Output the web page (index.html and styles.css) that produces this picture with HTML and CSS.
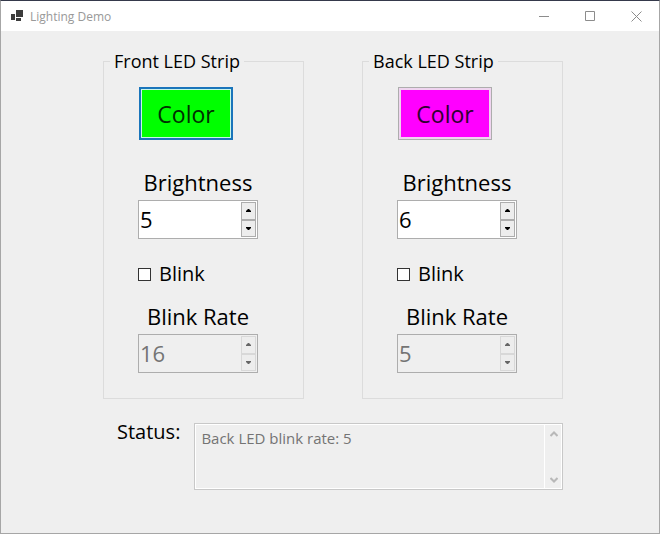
FILE: index.html
```
<!DOCTYPE html>
<html lang="en">
<head>
<meta charset="utf-8">
<title>Lighting Demo</title>
<link rel="stylesheet" href="styles.css">
</head>
<body>
<div class="window">
  <header class="titlebar">
    <svg class="app-icon" width="14" height="12" viewBox="0 0 14 12" aria-hidden="true"><path d="M5 0h7v7H5zM0 4h4v6H0zM5 8h5v3H5z"/></svg>
    <h1 class="title">Lighting Demo</h1>
    <button class="caption" type="button" aria-label="Minimize"><svg width="11" height="11" viewBox="0 0 11 11"><path d="M0 5.500h10"/></svg></button>
    <button class="caption" type="button" aria-label="Maximize"><svg width="11" height="11" viewBox="0 0 11 11"><path d="M.5.500h9v9h-9z"/></svg></button>
    <button class="caption" type="button" aria-label="Close"><svg width="11" height="11" viewBox="0 0 11 11"><path d="M.5.500l10 10M10.500.500l-10 10"/></svg></button>
  </header>
  <main class="form">
    <div class="strips">
      <fieldset class="strip">
        <legend>Front LED Strip</legend>
        <button class="color color-green" type="button">Color</button>
        <label class="caption-text" for="front-brightness">Brightness</label>
        <div class="spinner">
          <input id="front-brightness" type="text" inputmode="numeric" value="5">
          <div class="steps">
            <button type="button" aria-label="Increase"><svg width="5" height="3" viewBox="0 0 5 3"><path d="M0 3V2l2-2h1l2 2v1z"/></svg></button>
            <button type="button" aria-label="Decrease"><svg width="5" height="3" viewBox="0 0 5 3"><path d="M0 0v1l2 2h1l2-2V0z"/></svg></button>
          </div>
        </div>
        <label class="check"><input type="checkbox">Blink</label>
        <label class="caption-text" for="front-rate">Blink Rate</label>
        <div class="spinner disabled">
          <input id="front-rate" type="text" inputmode="numeric" value="16" disabled>
          <div class="steps">
            <button type="button" aria-label="Increase" disabled><svg width="5" height="3" viewBox="0 0 5 3"><path d="M0 3V2l2-2h1l2 2v1z"/></svg></button>
            <button type="button" aria-label="Decrease" disabled><svg width="5" height="3" viewBox="0 0 5 3"><path d="M0 0v1l2 2h1l2-2V0z"/></svg></button>
          </div>
        </div>
      </fieldset>
      <fieldset class="strip">
        <legend>Back LED Strip</legend>
        <button class="color color-magenta" type="button">Color</button>
        <label class="caption-text" for="back-brightness">Brightness</label>
        <div class="spinner">
          <input id="back-brightness" type="text" inputmode="numeric" value="6">
          <div class="steps">
            <button type="button" aria-label="Increase"><svg width="5" height="3" viewBox="0 0 5 3"><path d="M0 3V2l2-2h1l2 2v1z"/></svg></button>
            <button type="button" aria-label="Decrease"><svg width="5" height="3" viewBox="0 0 5 3"><path d="M0 0v1l2 2h1l2-2V0z"/></svg></button>
          </div>
        </div>
        <label class="check"><input type="checkbox">Blink</label>
        <label class="caption-text" for="back-rate">Blink Rate</label>
        <div class="spinner disabled">
          <input id="back-rate" type="text" inputmode="numeric" value="5" disabled>
          <div class="steps">
            <button type="button" aria-label="Increase" disabled><svg width="5" height="3" viewBox="0 0 5 3"><path d="M0 3V2l2-2h1l2 2v1z"/></svg></button>
            <button type="button" aria-label="Decrease" disabled><svg width="5" height="3" viewBox="0 0 5 3"><path d="M0 0v1l2 2h1l2-2V0z"/></svg></button>
          </div>
        </div>
      </fieldset>
    </div>
    <div class="status">
      <label for="status">Status:</label>
      <div class="status-box">
        <textarea id="status" disabled>Back LED blink rate: 5</textarea>
        <div class="scroll" aria-hidden="true">
          <svg width="8" height="6" viewBox="0 0 8 6"><path d="M.5 5L4 1.500 7.500 5"/></svg>
          <svg width="8" height="6" viewBox="0 0 8 6"><path d="M.5 1L4 4.500 7.500 1"/></svg>
        </div>
      </div>
    </div>
  </main>
</div>
</body>
</html>
```
FILE: styles.css
```
* { box-sizing: border-box; }

body {
  margin: 0;
  background: #efefef;
  color: #000;
  font-family: "Open Sans", "Noto Sans", sans-serif;
}

button, input, textarea { font-family: inherit; }

.window {
  display: flex;
  flex-direction: column;
  min-height: 100vh;
  border: 1px solid #a6a6a6;
  border-top-color: #35394b;
}

.titlebar {
  display: flex;
  align-items: center;
  height: 30px;
  padding-left: 10px;
  background: #fff;
}

.app-icon { fill: #3c3c3c; }

.title {
  flex: 1;
  margin: 0 0 0 5px;
  color: #999;
  font-size: 12px;
  font-weight: 400;
}

.caption {
  display: grid;
  place-items: center;
  width: 46px;
  height: 30px;
  padding: 0;
  border: 0;
  background: none;
}

.caption svg {
  fill: none;
  stroke: #8c8c8c;
}

.form { padding: 16px 96px 42px 102px; }

.strips {
  display: grid;
  grid-template-columns: 1fr 1fr;
  gap: 58px;
}

.strip {
  display: flex;
  flex-direction: column;
  align-items: flex-start;
  min-width: 0;
  margin: 0;
  padding: 12px 34px 25px;
  border: 1px solid #dcdcdc;
}

.strip legend {
  margin-left: -28px;
  padding: 0 4px;
  font-size: 18px;
  line-height: 28px;
}

.color {
  width: 94px;
  height: 53px;
  margin: 0 1px 26px;
  padding: 0;
  font-size: 23px;
  line-height: 30px;
}

.color-green {
  border: 2px solid #1a75bb;
  background: #0f0;
  box-shadow: inset 0 0 0 1px #c8f5ea;
  color: #003000;
}

.color-magenta {
  border: 1px solid #adadad;
  background: #f0f;
  box-shadow: inset 0 0 0 2px #f0d4f0;
  color: #300030;
}

.caption-text {
  width: 120px;
  padding-bottom: 2px;
  font-size: 22px;
  line-height: 32px;
  text-align: center;
}

.spinner {
  display: flex;
  width: 120px;
  height: 39px;
  padding: 1px;
  border: 1px solid #adadad;
  background: #fff;
}

.spinner input {
  flex: 1;
  min-width: 0;
  padding: 0 0 2px;
  border: 0;
  background: none;
  color: #000;
  font-size: 22px;
}

.steps {
  display: flex;
  flex-direction: column;
  width: 15px;
}

.steps button {
  display: grid;
  flex: 1;
  place-items: center;
  padding: 0;
  border: 1px solid #adadad;
  background: #ededed;
}

.disabled { background: #efefef; }
.disabled input { color: #747474; }
.disabled button { border-color: #d8d8d8; }
.disabled svg { fill: #666; }

.check {
  display: flex;
  align-items: center;
  gap: 8px;
  margin: 21px 0 12px;
  font-size: 20px;
  line-height: 28px;
}

.check input {
  appearance: none;
  width: 13px;
  height: 13px;
  margin: 0;
  border: 1px solid #333;
  background: #fff;
}

.status {
  display: flex;
  gap: 14px;
  margin-top: 24px;
  padding-left: 14px;
}

.status label {
  font-size: 20px;
  line-height: 18px;
}

.status-box {
  display: flex;
  flex: 1;
  height: 67px;
  border: 1px solid #c8c8c8;
  outline: 1px solid #fff;
  outline-offset: -2px;
}

.status-box textarea {
  flex: 1;
  min-width: 0;
  padding: 4px 6px;
  border: 0;
  background: none;
  color: #747474;
  font-size: 15px;
  line-height: 20px;
  resize: none;
  overflow: hidden;
}

.scroll {
  display: flex;
  flex-direction: column;
  align-items: center;
  justify-content: space-between;
  width: 18px;
  padding: 7px 0 6px;
  border-left: 1px solid #fff;
}

.scroll svg {
  fill: none;
  stroke: #b8b8b8;
  stroke-width: 2;
}
```
